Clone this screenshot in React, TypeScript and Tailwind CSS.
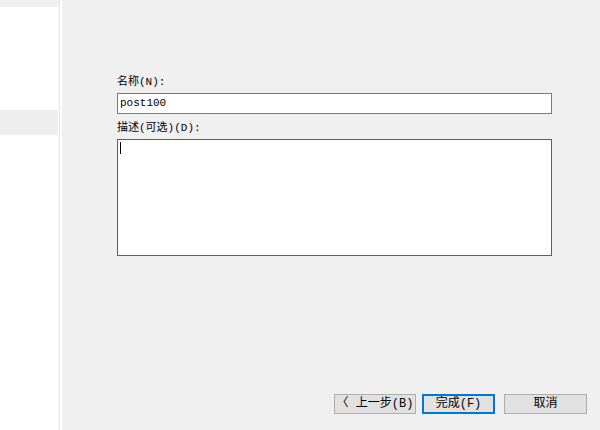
import React from 'react';

const ui = { fontFamily: '"Liberation Mono", "Noto Sans CJK SC", monospace' };

function Button({ children, primary, className }: { children: React.ReactNode; primary?: boolean; className?: string }) {
  return (
    <button
      className={
        'h-[20px] bg-[#e1e1e1] text-[12px] leading-none text-black flex items-center justify-center ' +
        (primary ? 'border-2 border-[#0078d7] ' : 'border border-[#adadad] ') +
        (className ?? '')
      }
      style={ui}
    >
      {children}
    </button>
  );
}

export default function App() {
  return (
    <div className="w-[600px] h-[430px] flex bg-white overflow-hidden" style={ui}>
      {/* Sidebar */}
      <div className="w-[59px] flex flex-col bg-white">
        <div className="h-[7px] bg-[#f0f0f0]" />
        <div className="h-[103px]" />
        <div className="h-[25px] w-[58px] bg-[#eeeeee]" />
      </div>
      <div className="w-[1px] bg-[#e4e4e4]" />
      <div className="w-[2px] bg-white" />

      {/* Main */}
      <div className="flex-1 bg-[#f0f0f0] flex flex-col pl-[55px] pr-[48px] pt-[74px] pb-[16px]">
        <label className="h-[16px] text-[11px] leading-[16px] text-black">名称(N):</label>
        <div className="mt-[3px] h-[21px] bg-white border border-[#7a7a7a] flex items-center px-[2px] text-[11px] text-black">
          post100
        </div>
        <label className="mt-[6px] h-[16px] text-[11px] leading-[16px] text-black">描述(可选)(D):</label>
        {/* focused textarea: blue frame */}
        <div className="mt-[3px] h-[117px] bg-[#0078d7] p-[1px] flex">
          <div className="flex-1 bg-white relative">
            <span className="absolute left-[2px] top-[2px] w-[1px] h-[12px] bg-black" />
          </div>
        </div>

        <div className="mt-auto flex justify-end -mr-[35px]">
          <Button className="w-[82px]">〈 上一步(B)</Button>
          <Button primary className="w-[73px] ml-[6px]">完成(F)</Button>
          <Button className="w-[83px] ml-[9px]">取消</Button>
        </div>
      </div>
    </div>
  );
}
